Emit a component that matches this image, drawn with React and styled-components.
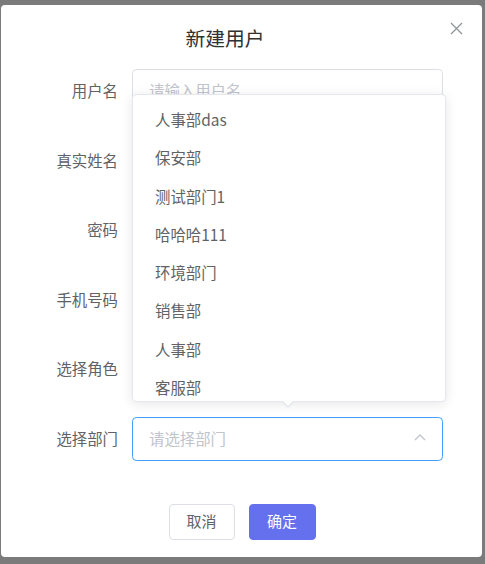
import React from "react";
import styled, { createGlobalStyle } from "styled-components";

const GlobalStyle = createGlobalStyle`
  html, body {
    margin: 0;
    padding: 0;
    background: #7b7b7b;
    font-family: "Noto Sans CJK SC", "Liberation Sans", sans-serif;
  }
  #root {
    height: 564px;
    overflow: hidden;
  }
`;

const Dialog = styled.div`
  position: relative;
  margin: 5px 0 0 1px;
  width: 481px;
  height: 552px;
  background: #fff;
  border-radius: 4px;
  box-sizing: border-box;
`;

const Header = styled.div`
  padding: 22px 33px 20px 0;
  text-align: center;
  line-height: 22px;
  font-size: 19.8px;
  color: #303133;
`;

const Close = styled.button`
  position: absolute;
  top: 17px;
  right: 19px;
  padding: 0;
  border: 0;
  background: none;
  cursor: pointer;
  display: flex;
`;

const Form = styled.div`
  padding-right: 39px;
`;

const Row = styled.div`
  display: flex;
  align-items: center;
  margin-bottom: ${(p) => (p.last ? 0 : "25.6px")};
`;

const Label = styled.label`
  width: 131px;
  flex-shrink: 0;
  box-sizing: border-box;
  padding-right: 14px;
  text-align: right;
  font-size: 15.4px;
  line-height: 20px;
  padding-bottom: 2px;
  color: #606266;
`;

const Field = styled.div`
  position: relative;
  flex: 1;
`;

const Input = styled.div`
  height: 44px;
  box-sizing: border-box;
  border: 1px solid ${(p) => (p.focused ? "#409eff" : "#dcdfe6")};
  border-radius: 4.4px;
  padding: 0 16px 2px;
  display: flex;
  align-items: center;
  justify-content: space-between;
  font-size: 15.4px;
  color: #c0c4cc;
`;

const Dropdown = styled.div`
  position: absolute;
  left: 0;
  bottom: calc(100% + 15px);
  width: 314px;
  height: 308px;
  box-sizing: border-box;
  background: #fff;
  border: 1px solid #e4e7ed;
  border-radius: 4px;
  box-shadow: 0 2px 12px rgba(0, 0, 0, 0.1);
  z-index: 2;
`;

const List = styled.ul`
  list-style: none;
  margin: 0;
  height: 100%;
  overflow: hidden;
  padding: 5px 0 0;
  box-sizing: border-box;
`;

const Item = styled.li`
  height: 38.3px;
  line-height: 38.3px;
  padding-left: 22px;
  font-size: 15.4px;
  color: #606266;
`;

const Arrow = styled.div`
  position: absolute;
  left: 148px;
  bottom: -7px;
  width: 0;
  height: 0;
  border-left: 7px solid transparent;
  border-right: 7px solid transparent;
  border-top: 7px solid #e4e7ed;

  &::after {
    content: "";
    position: absolute;
    left: -6px;
    top: -8px;
    border-left: 6px solid transparent;
    border-right: 6px solid transparent;
    border-top: 6px solid #fff;
  }
`;

const Footer = styled.div`
  display: flex;
  justify-content: center;
  gap: 14px;
  padding-top: 43px;
  padding-left: 1px;
`;

const Button = styled.button`
  height: 36px;
  width: ${(p) => (p.primary ? "67px" : "66px")};
  box-sizing: border-box;
  border-radius: 4px;
  font-family: inherit;
  font-size: 15px;
  line-height: 20px;
  padding: 0 0 2px;
  border: 1px solid ${(p) => (p.primary ? "#6470ee" : "#dcdfe6")};
  background: ${(p) => (p.primary ? "#6470ee" : "#fff")};
  color: ${(p) => (p.primary ? "#fff" : "#606266")};
  cursor: pointer;
`;

const departments = [
  "人事部das",
  "保安部",
  "测试部门1",
  "哈哈哈111",
  "环境部门",
  "销售部",
  "人事部",
  "客服部",
  "财务部",
];

const fields = [
  { label: "用户名", placeholder: "请输入用户名" },
  { label: "真实姓名", placeholder: "请输入真实姓名" },
  { label: "密码", placeholder: "请输入密码" },
  { label: "手机号码", placeholder: "请输入手机号码" },
  { label: "选择角色", placeholder: "请选择角色" },
];

const CloseIcon = () => (
  <svg width="13" height="13" viewBox="0 0 13 13">
    <path d="M1 1L12 12M12 1L1 12" stroke="#909399" strokeWidth="1.3" />
  </svg>
);

const ChevronUp = () => (
  <svg width="12" height="7" viewBox="0 0 12 7">
    <path d="M1 6L6 1L11 6" fill="none" stroke="#c0c4cc" strokeWidth="1.3" />
  </svg>
);

export default function App() {
  return (
    <>
      <GlobalStyle />
      <Dialog>
        <Header>新建用户</Header>
        <Close aria-label="close">
          <CloseIcon />
        </Close>
        <Form>
          {fields.map((f) => (
            <Row key={f.label}>
              <Label>{f.label}</Label>
              <Field>
                <Input>{f.placeholder}</Input>
              </Field>
            </Row>
          ))}
          <Row last>
            <Label>选择部门</Label>
            <Field>
              <Dropdown>
                <List>
                  {departments.map((d) => (
                    <Item key={d}>{d}</Item>
                  ))}
                </List>
                <Arrow />
              </Dropdown>
              <Input focused>
                请选择部门
                <ChevronUp />
              </Input>
            </Field>
          </Row>
        </Form>
        <Footer>
          <Button>取消</Button>
          <Button primary>确定</Button>
        </Footer>
      </Dialog>
    </>
  );
}
